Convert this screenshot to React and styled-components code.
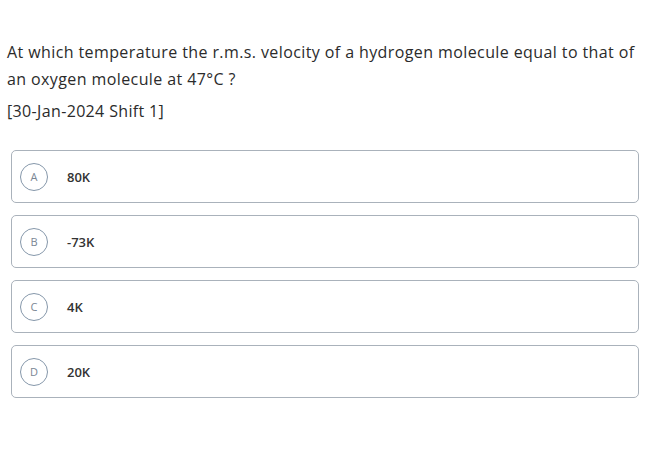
import styled, { createGlobalStyle } from "styled-components";

const Global = createGlobalStyle`
  body {
    margin: 0;
    background: #fff;
    font-family: "Open Sans", "Liberation Sans", sans-serif;
  }
`;

const options = [
  { key: "A", text: "80K" },
  { key: "B", text: "-73K" },
  { key: "C", text: "4K" },
  { key: "D", text: "20K" },
];

const App = () => {
  return (
    <Page>
      <Global />
      <Question>
        At which temperature the r.m.s. velocity of a hydrogen molecule equal to that of an
        oxygen molecule at 47°C ?
      </Question>
      <Source>[30-Jan-2024 Shift 1]</Source>
      <Options>
        {options.map((o) => (
          <Option key={o.key}>
            <Badge>{o.key}</Badge>
            <Answer>{o.text}</Answer>
          </Option>
        ))}
      </Options>
    </Page>
  );
};

export default App;

const Page = styled.div`
  width: 650px;
  height: 450px;
  box-sizing: border-box;
  padding: 39px 11px 0 7px;
  color: #2b2b2b;
`;

const Question = styled.p`
  margin: 0;
  font-size: 16px;
  line-height: 27px;
  letter-spacing: 0.4px;
`;

const Source = styled.p`
  margin: 5px 0 0;
  font-size: 16px;
  line-height: 27px;
  letter-spacing: 0.35px;
`;

const Options = styled.div`
  display: flex;
  flex-direction: column;
  gap: 12px;
  margin: 25px 0 0 4px;
`;

const Option = styled.div`
  display: flex;
  align-items: center;
  height: 53px;
  box-sizing: border-box;
  padding-left: 8px;
  border: 1.5px solid #aab2bb;
  border-radius: 5px;
`;

const Badge = styled.span`
  width: 26px;
  height: 26px;
  border: 1.2px solid #8597aa;
  border-radius: 50%;
  display: flex;
  align-items: center;
  justify-content: center;
  font-size: 11px;
  color: #7a8694;
`;

const Answer = styled.span`
  margin-left: 19px;
  font-size: 13px;
  font-weight: 600;
  color: #333;
`;
